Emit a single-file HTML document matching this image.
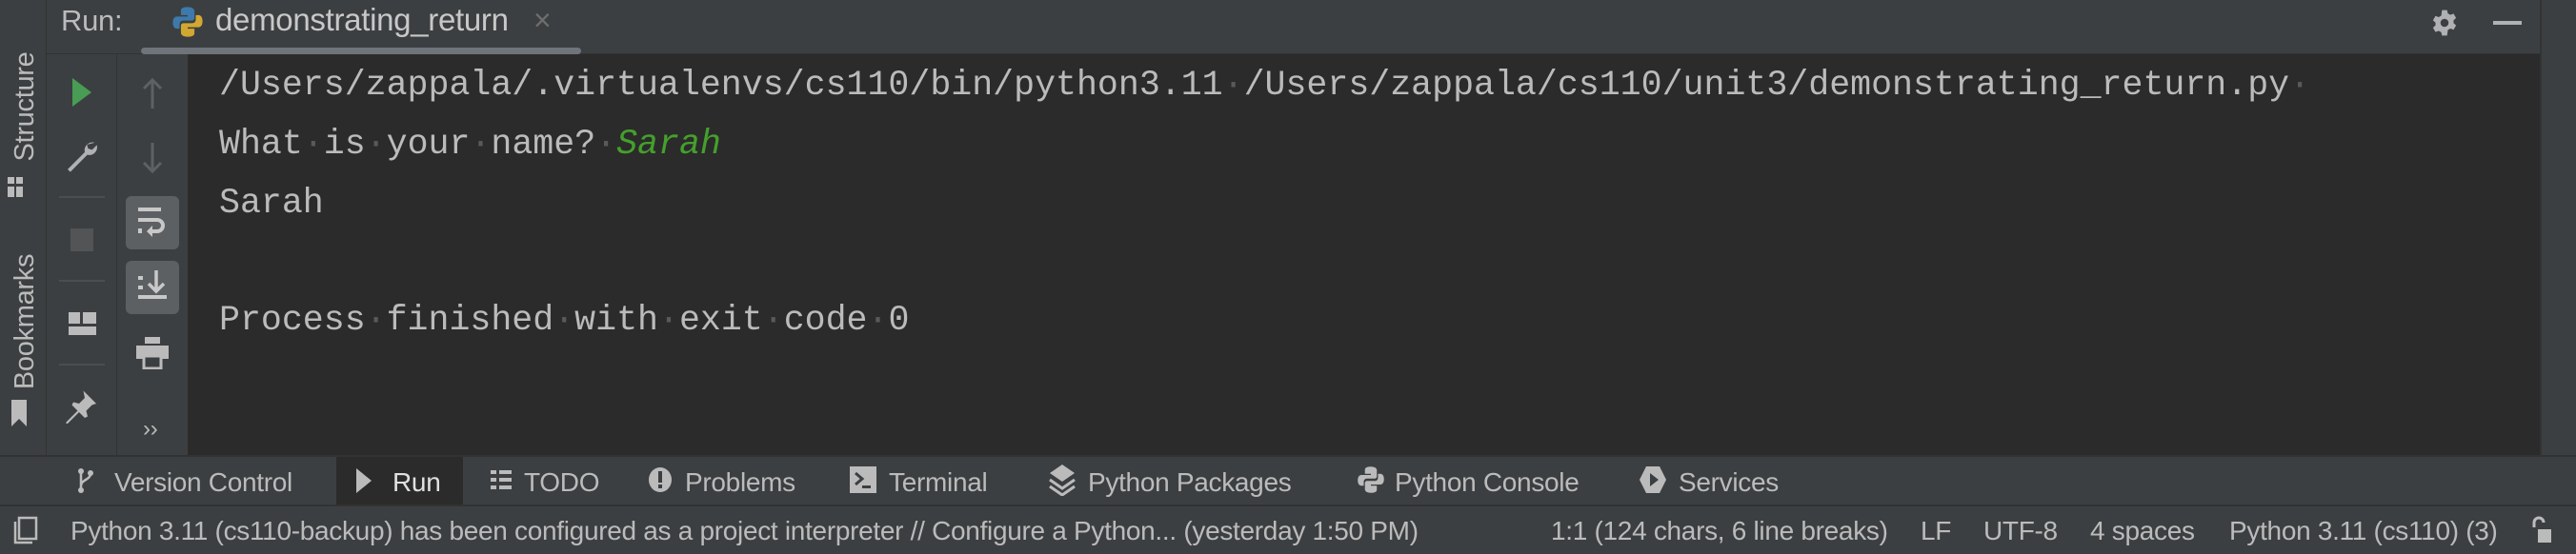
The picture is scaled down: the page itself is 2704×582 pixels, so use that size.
<!DOCTYPE html>
<html><head><meta charset="utf-8"><style>
*{margin:0;padding:0;box-sizing:border-box}
body{width:2704px;height:582px;background:#3c3f41;position:relative;overflow:hidden;font-family:"Liberation Sans",sans-serif;color:#bbbbbb}
.a{position:absolute}
.mono{font-family:"Liberation Mono",monospace;font-size:36.6px;color:#bbbbbb;white-space:pre;line-height:40px}
.d{color:#5a5a5a}
.ui{font-size:28px;white-space:nowrap;line-height:30px;letter-spacing:-0.3px}
</style></head><body>
<!-- top bar -->
<div class="a" style="left:49px;top:0;width:2617px;height:57px;background:#3c3f41;border-bottom:1px solid #323232"></div>
<div class="a ui" style="left:64px;top:7px;font-size:31px">Run:</div>
<svg class="a" style="left:180px;top:6px" width="34" height="34" viewBox="0 0 24 24"><path d="M12 1c-5 0-5 2-5 3v3h5v1H4c-2 0-3 2-3 4.5S2 17 4 17h2v-3c0-2 1-3 3-3h6c1.5 0 2-1 2-2V4c0-1.5-1.5-3-5-3z" fill="#3d7aab"/><path d="M12 23c5 0 5-2 5-3v-3h-5v-1h8c2 0 3-2 3-4.5S22 7 20 7h-2v3c0 2-1 3-3 3H9c-1.5 0-2 1-2 2v5c0 1.5 1.5 3 5 3z" fill="#d2a832"/></svg>
<div class="a ui" style="left:226px;top:6px;font-size:33px;color:#c8c8c8">demonstrating_return</div>
<div class="a ui" style="left:560px;top:6px;font-size:32px;color:#6e6e6e">×</div>
<div class="a" style="left:148px;top:50px;width:462px;height:7px;border-radius:4px;background:#6f737a"></div>
<svg class="a" style="left:2550px;top:8px" width="32" height="32" viewBox="0 0 24 24"><path fill="#afb1b3" fill-rule="evenodd" d="M10 2h4l.6 2.6 2 1.1 2.5-.9 2 3.4-2 1.8v2.2l2 1.8-2 3.4-2.5-.9-2 1.1L14 22h-4l-.6-2.6-2-1.1-2.5.9-2-3.4 2-1.8v-2.2l-2-1.8 2-3.4 2.5.9 2-1.1zM12 8.8a3.2 3.2 0 100 6.4 3.2 3.2 0 000-6.4z"/></svg>
<div class="a" style="left:2617px;top:22px;width:30px;height:4px;background:#afb1b3"></div>
<div class="a" style="left:2666px;top:0;width:38px;height:478px;background:#3c3f41;border-left:2px solid #333"></div>
<!-- left strip -->
<div class="a" style="left:0;top:0;width:49px;height:478px;background:#3c3f41;border-right:1px solid #323232"></div>
<div class="a ui" style="left:26px;top:112px;transform:translate(-50%,-50%) rotate(-90deg);font-size:29px;color:#bbb">Structure</div>
<div class="a" style="left:8px;top:186px;width:7px;height:7px;background:#bbb"></div><div class="a" style="left:17px;top:186px;width:7px;height:7px;background:#bbb"></div><div class="a" style="left:17px;top:196px;width:7px;height:11px;background:#bbb"></div><div class="a" style="left:8px;top:196px;width:7px;height:11px;background:#bbb"></div>
<div class="a ui" style="left:26px;top:338px;transform:translate(-50%,-50%) rotate(-90deg);font-size:29px;color:#bbb">Bookmarks</div>
<svg class="a" style="left:12px;top:420px" width="16" height="28" viewBox="0 0 16 28"><path d="M0 0h16v28l-8-8-8 8z" fill="#bbb"/></svg>
<!-- toolbar columns -->
<div class="a" style="left:49px;top:57px;width:74px;height:421px;background:#3c3f41;border-right:1px solid #323232"></div>
<div class="a" style="left:123px;top:57px;width:74px;height:421px;background:#3c3f41"></div>
<svg class="a" style="left:76px;top:82px" width="20" height="30"><path d="M0 0L20 15 0 30z" fill="#499c54"/></svg>
<svg class="a" style="left:66px;top:144px" width="40" height="40" viewBox="0 0 24 24"><path d="M20 3.5a5 5 0 00-6.2 6L3 20.3 4.7 22 15.4 11.2a5 5 0 006-6.2l-3 3-2.5-.7-.7-2.5z" fill="#afb1b3"/></svg>
<div class="a" style="left:62px;top:206px;width:48px;height:2px;background:#4b4d4f"></div>
<div class="a" style="left:74px;top:240px;width:24px;height:24px;background:#525456"></div>
<div class="a" style="left:62px;top:294px;width:48px;height:2px;background:#4b4d4f"></div>
<div class="a" style="left:72px;top:328px;width:12px;height:12px;background:#bbb"></div><div class="a" style="left:87px;top:328px;width:14px;height:12px;background:#bbb"></div><div class="a" style="left:72px;top:343px;width:29px;height:9px;background:#bbb"></div>
<div class="a" style="left:62px;top:382px;width:48px;height:2px;background:#4b4d4f"></div>
<svg class="a" style="left:68px;top:408px" width="36" height="38" viewBox="0 0 24 24"><path d="M13 1l9 9-3 1-4 4 1 4-2 1-4-4-8 8-1 0 0-1 8-8-4-4 1-2 4 1 4-4z" fill="#bbb"/></svg>
<svg class="a" style="left:148px;top:82px" width="24" height="32" viewBox="0 0 24 32"><path d="M12 2v30M3 11l9-9 9 9" stroke="#5e6163" stroke-width="3" fill="none"/></svg>
<svg class="a" style="left:148px;top:150px" width="24" height="32" viewBox="0 0 24 32"><path d="M12 0v30M3 21l9 9 9-9" stroke="#5e6163" stroke-width="3" fill="none"/></svg>
<div class="a" style="left:132px;top:206px;width:56px;height:56px;border-radius:6px;background:#5d6063"></div>
<svg class="a" style="left:142px;top:216px" width="36" height="36" viewBox="0 0 36 36"><path d="M3 4h24" stroke="#c8c8c8" stroke-width="4"/><path d="M3 15h20a6 6 0 010 12h-8" stroke="#c8c8c8" stroke-width="4" fill="none"/><path d="M18 21l-6 6 6 6z" fill="#c8c8c8"/><rect x="3" y="24" width="4" height="5" fill="#c8c8c8"/></svg>
<div class="a" style="left:132px;top:274px;width:56px;height:56px;border-radius:6px;background:#5d6063"></div>
<svg class="a" style="left:142px;top:282px" width="36" height="40" viewBox="0 0 36 40"><path d="M22 2v22M14 16l8 8 8-8" stroke="#c8c8c8" stroke-width="3.5" fill="none"/><rect x="3" y="8" width="5" height="4" fill="#c8c8c8"/><rect x="3" y="18" width="5" height="4" fill="#c8c8c8"/><rect x="3" y="28" width="30" height="4" fill="#c8c8c8"/></svg>
<svg class="a" style="left:142px;top:354px" width="36" height="34" viewBox="0 0 36 34"><rect x="10" y="0" width="16" height="7" fill="#bbb"/><rect x="1" y="9" width="34" height="14" fill="#bbb"/><rect x="9" y="20" width="18" height="13" fill="#3c3f41" stroke="#bbb" stroke-width="3"/></svg>
<div class="a ui" style="left:150px;top:436px;color:#bbb;font-size:24px">››</div>
<!-- console -->
<div class="a" style="left:197px;top:57px;width:2469px;height:421px;background:#2b2b2b"></div>
<div class="a mono" style="left:230px;top:70px">/Users/zappala/.virtualenvs/cs110/bin/python3.11<span class="d">·</span>/Users/zappala/cs110/unit3/demonstrating_return.py<span class="d">·</span></div>
<div class="a mono" style="left:230px;top:132px">What<span class="d">·</span>is<span class="d">·</span>your<span class="d">·</span>name?<span class="d">·</span><i style="color:#44a02b">Sarah</i></div>
<div class="a mono" style="left:230px;top:194px">Sarah</div>
<div class="a mono" style="left:230px;top:317px">Process<span class="d">·</span>finished<span class="d">·</span>with<span class="d">·</span>exit<span class="d">·</span>code<span class="d">·</span>0</div>
<!-- tool window bar -->
<div class="a" style="left:0;top:478px;width:2704px;height:2px;background:#323232"></div>
<div class="a" style="left:353px;top:480px;width:133px;height:50px;background:#2b2b2b"></div>
<div class="a" style="left:0;top:530px;width:2704px;height:2px;background:#323232"></div>
<svg class="a" style="left:82px;top:491px" width="16" height="28" viewBox="0 0 16 28"><circle cx="3" cy="4" r="3" fill="#bbb"/><circle cx="3" cy="24" r="3" fill="#bbb"/><circle cx="13" cy="6" r="3" fill="#bbb"/><path d="M3 4v20M13 6c0 8-10 6-10 14" stroke="#bbb" stroke-width="2.5" fill="none"/></svg>
<div class="a ui" style="left:120px;top:492px">Version Control</div>
<svg class="a" style="left:374px;top:492px" width="16" height="26"><path d="M0 0l16 13-16 13z" fill="#bbb"/></svg>
<div class="a ui" style="left:412px;top:492px;color:#e0e0e0">Run</div>
<div class="a" style="left:515px;top:494px;width:6px;height:4px;background:#bbb;box-shadow:0 8px 0 #bbb,0 16px 0 #bbb"></div><div class="a" style="left:524px;top:494px;width:13px;height:4px;background:#bbb;box-shadow:0 8px 0 #bbb,0 16px 0 #bbb"></div>
<div class="a ui" style="left:550px;top:492px">TODO</div>
<svg class="a" style="left:680px;top:490px" width="26" height="28" viewBox="0 0 26 28"><ellipse cx="13" cy="14" rx="12" ry="13" fill="#bbb"/><rect x="11" y="5" width="4" height="12" fill="#3c3f41"/><rect x="11" y="19" width="4" height="4" fill="#3c3f41"/></svg>
<div class="a ui" style="left:719px;top:492px">Problems</div>
<svg class="a" style="left:892px;top:490px" width="28" height="28"><rect width="28" height="28" fill="#bbb"/><path d="M6 7l7 6-7 6" stroke="#3c3f41" stroke-width="3" fill="none"/><rect x="13" y="20" width="9" height="3" fill="#3c3f41"/></svg>
<div class="a ui" style="left:933px;top:492px">Terminal</div>
<svg class="a" style="left:1100px;top:487px" width="30" height="34" viewBox="0 0 30 34"><path d="M15 1l13 9-13 9-13-9z" fill="#bbb"/><path d="M2 17l13 9 13-9M2 24l13 9 13-9" stroke="#bbb" stroke-width="3" fill="none"/></svg>
<div class="a ui" style="left:1142px;top:492px">Python Packages</div>
<svg class="a" style="left:1424px;top:489px" width="30" height="30" viewBox="0 0 24 24"><path d="M12 1c-5 0-5 2-5 3v3h5v1H4c-2 0-3 2-3 4.5S2 17 4 17h2v-3c0-2 1-3 3-3h6c1.5 0 2-1 2-2V4c0-1.5-1.5-3-5-3zM12 23c5 0 5-2 5-3v-3h-5v-1h8c2 0 3-2 3-4.5S22 7 20 7h-2v3c0 2-1 3-3 3H9c-1.5 0-2 1-2 2v5c0 1.5 1.5 3 5 3z" fill="#bbb"/></svg>
<div class="a ui" style="left:1464px;top:492px">Python Console</div>
<svg class="a" style="left:1720px;top:489px" width="30" height="30" viewBox="0 0 30 30"><path d="M8 1h14l7 14-7 14H8L1 15z" fill="#bbb"/><path d="M12 8l9 7-9 7z" fill="#3c3f41"/></svg>
<div class="a ui" style="left:1762px;top:492px">Services</div>
<!-- status bar -->
<svg class="a" style="left:14px;top:542px" width="26" height="30"><rect x="6" y="2" width="18" height="22" fill="none" stroke="#bbb" stroke-width="2.5"/><path d="M2 6v22h18" stroke="#bbb" stroke-width="2.5" fill="none"/></svg>
<div class="a ui" style="left:74px;top:543px">Python 3.11 (cs110-backup) has been configured as a project interpreter // Configure a Python... (yesterday 1:50 PM)</div>
<div class="a ui" style="left:1628px;top:543px">1:1 (124 chars, 6 line breaks)</div>
<div class="a ui" style="left:2016px;top:543px">LF</div>
<div class="a ui" style="left:2082px;top:543px">UTF-8</div>
<div class="a ui" style="left:2194px;top:543px">4 spaces</div>
<div class="a ui" style="left:2340px;top:543px">Python 3.11 (cs110) (3)</div>
<svg class="a" style="left:2656px;top:542px" width="24" height="30"><path d="M4 12V7a5 5 0 0110 0" stroke="#bbb" stroke-width="3" fill="none"/><rect x="8" y="14" width="14" height="14" fill="#bbb"/></svg>
</body></html>
